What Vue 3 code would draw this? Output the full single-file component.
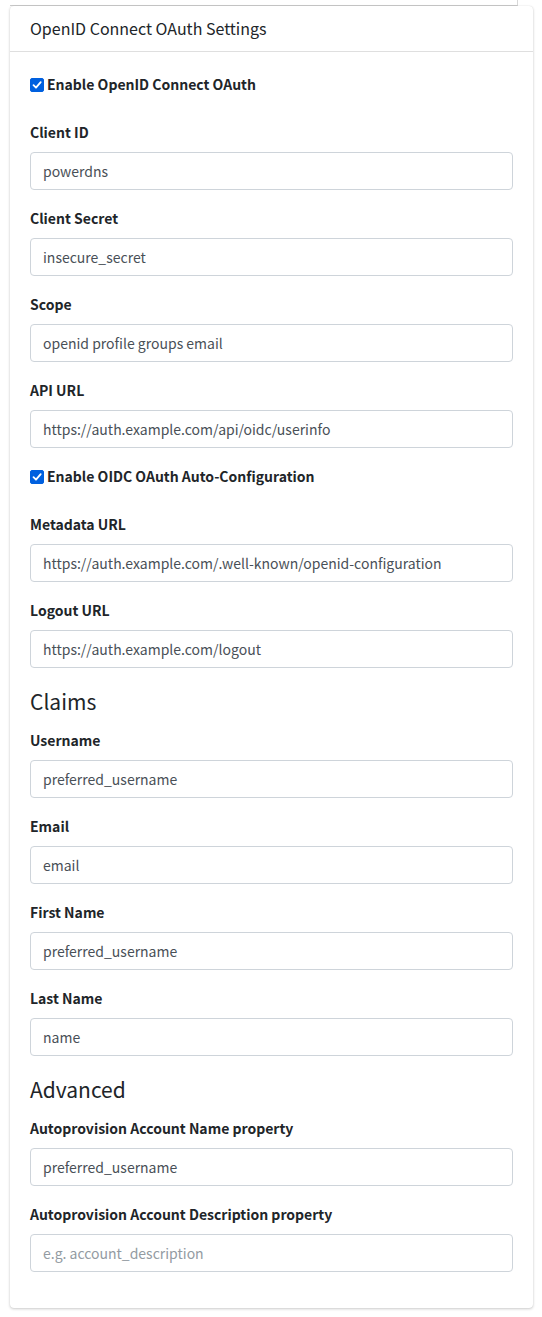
<script setup>
import { reactive } from 'vue'

const groups = reactive([
  {
    items: [
      { id: 'oidc_enabled', type: 'checkbox', label: 'Enable OpenID Connect OAuth', value: true },
      { id: 'client_id', label: 'Client ID', value: 'powerdns' },
      { id: 'client_secret', label: 'Client Secret', value: 'insecure_secret' },
      { id: 'scope', label: 'Scope', value: 'openid profile groups email' },
      { id: 'api_url', label: 'API URL', value: 'https://auth.example.com/api/oidc/userinfo' },
      { id: 'auto_config', type: 'checkbox', label: 'Enable OIDC OAuth Auto-Configuration', value: true },
      { id: 'metadata_url', label: 'Metadata URL', value: 'https://auth.example.com/.well-known/openid-configuration' },
      { id: 'logout_url', label: 'Logout URL', value: 'https://auth.example.com/logout' },
    ],
  },
  {
    legend: 'Claims',
    items: [
      { id: 'username', label: 'Username', value: 'preferred_username' },
      { id: 'email', label: 'Email', value: 'email' },
      { id: 'first_name', label: 'First Name', value: 'preferred_username' },
      { id: 'last_name', label: 'Last Name', value: 'name' },
    ],
  },
  {
    legend: 'Advanced',
    items: [
      { id: 'account_name', label: 'Autoprovision Account Name property', value: 'preferred_username' },
      {
        id: 'account_description',
        label: 'Autoprovision Account Description property',
        value: '',
        placeholder: 'e.g. account_description',
      },
    ],
  },
])
</script>

<template>
  <main class="page">
    <div class="panel-end"></div>
    <section class="card">
      <header class="card-header">
        <h3 class="card-title">OpenID Connect OAuth Settings</h3>
      </header>
      <form class="card-body" @submit.prevent>
        <fieldset v-for="(group, i) in groups" :key="i" class="group">
          <legend v-if="group.legend" class="legend">{{ group.legend }}</legend>
          <template v-for="item in group.items" :key="item.id">
            <div v-if="item.type === 'checkbox'" class="check-row">
              <input :id="item.id" v-model="item.value" class="check" type="checkbox" />
              <label class="label" :for="item.id">{{ item.label }}</label>
            </div>
            <div v-else class="field">
              <label class="label" :for="item.id">{{ item.label }}</label>
              <input
                :id="item.id"
                v-model="item.value"
                class="control"
                type="text"
                spellcheck="false"
                :placeholder="item.placeholder"
              />
            </div>
          </template>
        </fieldset>
      </form>
    </section>
  </main>
</template>

<style>
body {
  background: #fff;
}
</style>

<style scoped>
.page {
  box-sizing: border-box;
  padding: 0 9px 9px 10px;
  color: #212529;
  font-family: "Source Sans Pro", "Noto Sans CJK SC", "Noto Sans", sans-serif;
  font-size: 14px;
  line-height: 24px;
}

.panel-end {
  box-sizing: border-box;
  height: 6px;
  margin-right: 15px;
  border-right: 1px solid #d8d8d8;
  border-bottom: 1px solid #cccccc;
}

.card {
  border-radius: 4px;
  background: #fff;
  box-shadow: 0 0 1px rgba(0, 0, 0, 0.125), 0 1px 3px rgba(0, 0, 0, 0.2);
}

.card-header {
  padding: 9px 20px 10px;
  border-bottom: 1px solid #dfdfdf;
}

.card-title {
  margin: 0;
  font-size: 16px;
  font-weight: 400;
  line-height: 26px;
}

.card-body {
  padding: 20px;
}

.group {
  min-width: 0;
  margin: 0;
  padding: 0;
  border: 0;
}

.legend {
  width: 100%;
  margin: 0 0 10px;
  padding: 0;
  font-size: 21px;
  line-height: 34px;
}

.check-row {
  display: flex;
  align-items: center;
  gap: 3px;
  margin-bottom: 24px;
}

.check {
  appearance: none;
  width: 14px;
  height: 14px;
  margin: 2px 0 0;
  border: 1px solid #767676;
  border-radius: 2px;
  background: #fff;
}

.check:checked {
  border-color: #0060df;
  background: #0060df url("data:image/svg+xml,%3Csvg xmlns='http://www.w3.org/2000/svg' viewBox='0 0 12 12'%3E%3Cpath d='M2.5 6.2 5 8.7 9.7 3.2' fill='none' stroke='white' stroke-width='1.8' stroke-linecap='round' stroke-linejoin='round'/%3E%3C/svg%3E") center / 12px 12px no-repeat;
}

.field {
  display: flex;
  flex-direction: column;
  gap: 8px;
  margin-bottom: 16px;
}

.label {
  font-weight: 700;
}

.control {
  box-sizing: border-box;
  width: 100%;
  height: 38px;
  padding: 6px 12px;
  border: 1px solid #ced4da;
  border-radius: 4px;
  outline: 0;
  background: #fff;
  color: #495057;
  font: inherit;
}

.control:focus {
  border-color: #80bdff;
}

.control::placeholder {
  color: #939ba2;
  opacity: 1;
}
</style>
